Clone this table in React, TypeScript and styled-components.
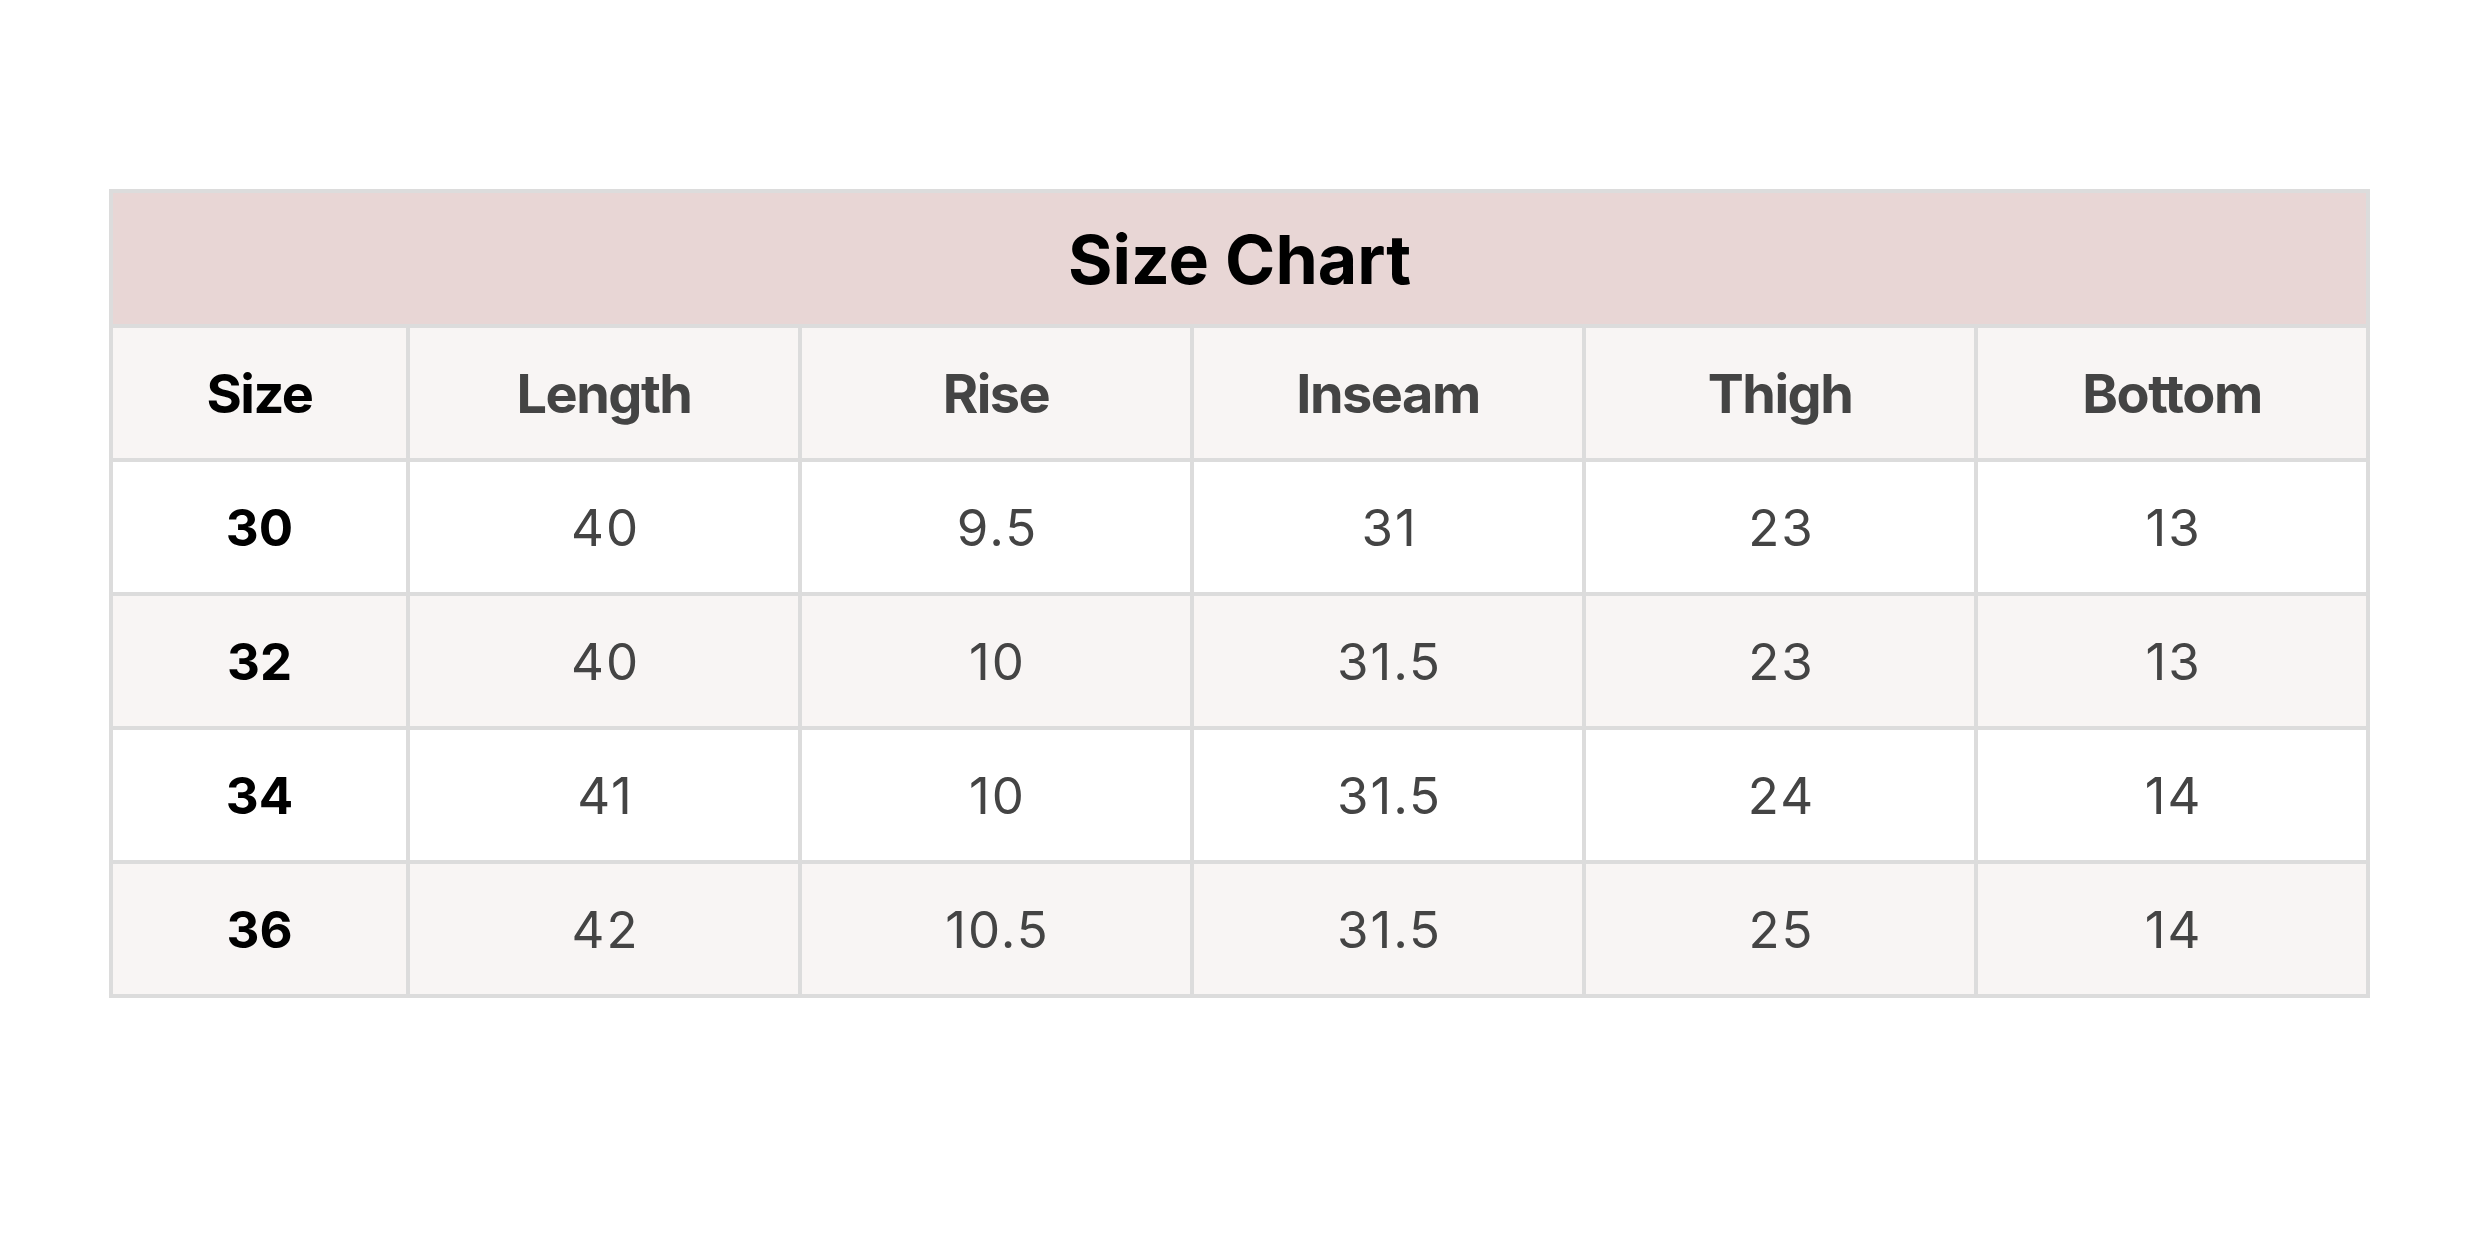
import React from "react";
import styled, { createGlobalStyle } from "styled-components";

interface SizeRow {
  size: string;
  length: string;
  rise: string;
  inseam: string;
  thigh: string;
  bottom: string;
}

const columns = ["Size", "Length", "Rise", "Inseam", "Thigh", "Bottom"];

const rows: SizeRow[] = [
  { size: "30", length: "40", rise: "9.5", inseam: "31", thigh: "23", bottom: "13" },
  { size: "32", length: "40", rise: "10", inseam: "31.5", thigh: "23", bottom: "13" },
  { size: "34", length: "41", rise: "10", inseam: "31.5", thigh: "24", bottom: "14" },
  { size: "36", length: "42", rise: "10.5", inseam: "31.5", thigh: "25", bottom: "14" },
];

const GlobalStyle = createGlobalStyle`
  html, body {
    margin: 0;
    padding: 0;
    background: #ffffff;
    font-family: Inter, "Noto Sans", "Liberation Sans", sans-serif;
  }
`;

const Page = styled.div`
  padding: 189px 0 0 109px;
`;

const Table = styled.table`
  width: 2259px;
  table-layout: fixed;
  border-collapse: collapse;
  border: 4px solid #dcdcdc;
`;

const Col = styled.col<{ $wide?: boolean }>`
  width: ${(p) => (p.$wide ? "392px" : "297px")};
`;

const TitleCell = styled.th`
  height: 131px;
  padding: 0;
  background: #e8d6d5;
  border: 4px solid #dcdcdc;
  color: #000;
  font-size: 68px;
  font-weight: 700;
  text-align: center;
  vertical-align: middle;
`;

const HeadRow = styled.tr`
  background: #f8f5f4;
`;

const BodyRow = styled.tr<{ $shaded: boolean }>`
  background: ${(p) => (p.$shaded ? "#f8f5f4" : "#ffffff")};
`;

const HeadCell = styled.th<{ $first?: boolean }>`
  height: 130px;
  padding: 0;
  border: 4px solid #dcdcdc;
  color: ${(p) => (p.$first ? "#000000" : "#444444")};
  font-size: 54px;
  font-weight: 700;
  letter-spacing: -1.5px;
  text-align: center;
  vertical-align: middle;
`;

const Cell = styled.td<{ $first?: boolean }>`
  height: 130px;
  padding: 0 0 0 ${(p) => (p.$first ? "0" : "3px")};
  border: 4px solid #dcdcdc;
  color: ${(p) => (p.$first ? "#000000" : "#444444")};
  font-size: 51px;
  font-weight: ${(p) => (p.$first ? 700 : 400)};
  letter-spacing: ${(p) => (p.$first ? "0" : "2px")};
  text-align: center;
  vertical-align: middle;
`;

const App: React.FC = () => {
  return (
    <>
      <GlobalStyle />
      <Page>
        <Table>
          <colgroup>
            <Col />
            <Col $wide />
            <Col $wide />
            <Col $wide />
            <Col $wide />
            <Col $wide />
          </colgroup>
          <thead>
            <tr>
              <TitleCell colSpan={6}>Size Chart</TitleCell>
            </tr>
            <HeadRow>
              {columns.map((c, i) => (
                <HeadCell key={c} $first={i === 0}>
                  {c}
                </HeadCell>
              ))}
            </HeadRow>
          </thead>
          <tbody>
            {rows.map((r, i) => (
              <BodyRow key={r.size} $shaded={i % 2 === 1}>
                <Cell $first>{r.size}</Cell>
                <Cell>{r.length}</Cell>
                <Cell>{r.rise}</Cell>
                <Cell>{r.inseam}</Cell>
                <Cell>{r.thigh}</Cell>
                <Cell>{r.bottom}</Cell>
              </BodyRow>
            ))}
          </tbody>
        </Table>
      </Page>
    </>
  );
};

export default App;
